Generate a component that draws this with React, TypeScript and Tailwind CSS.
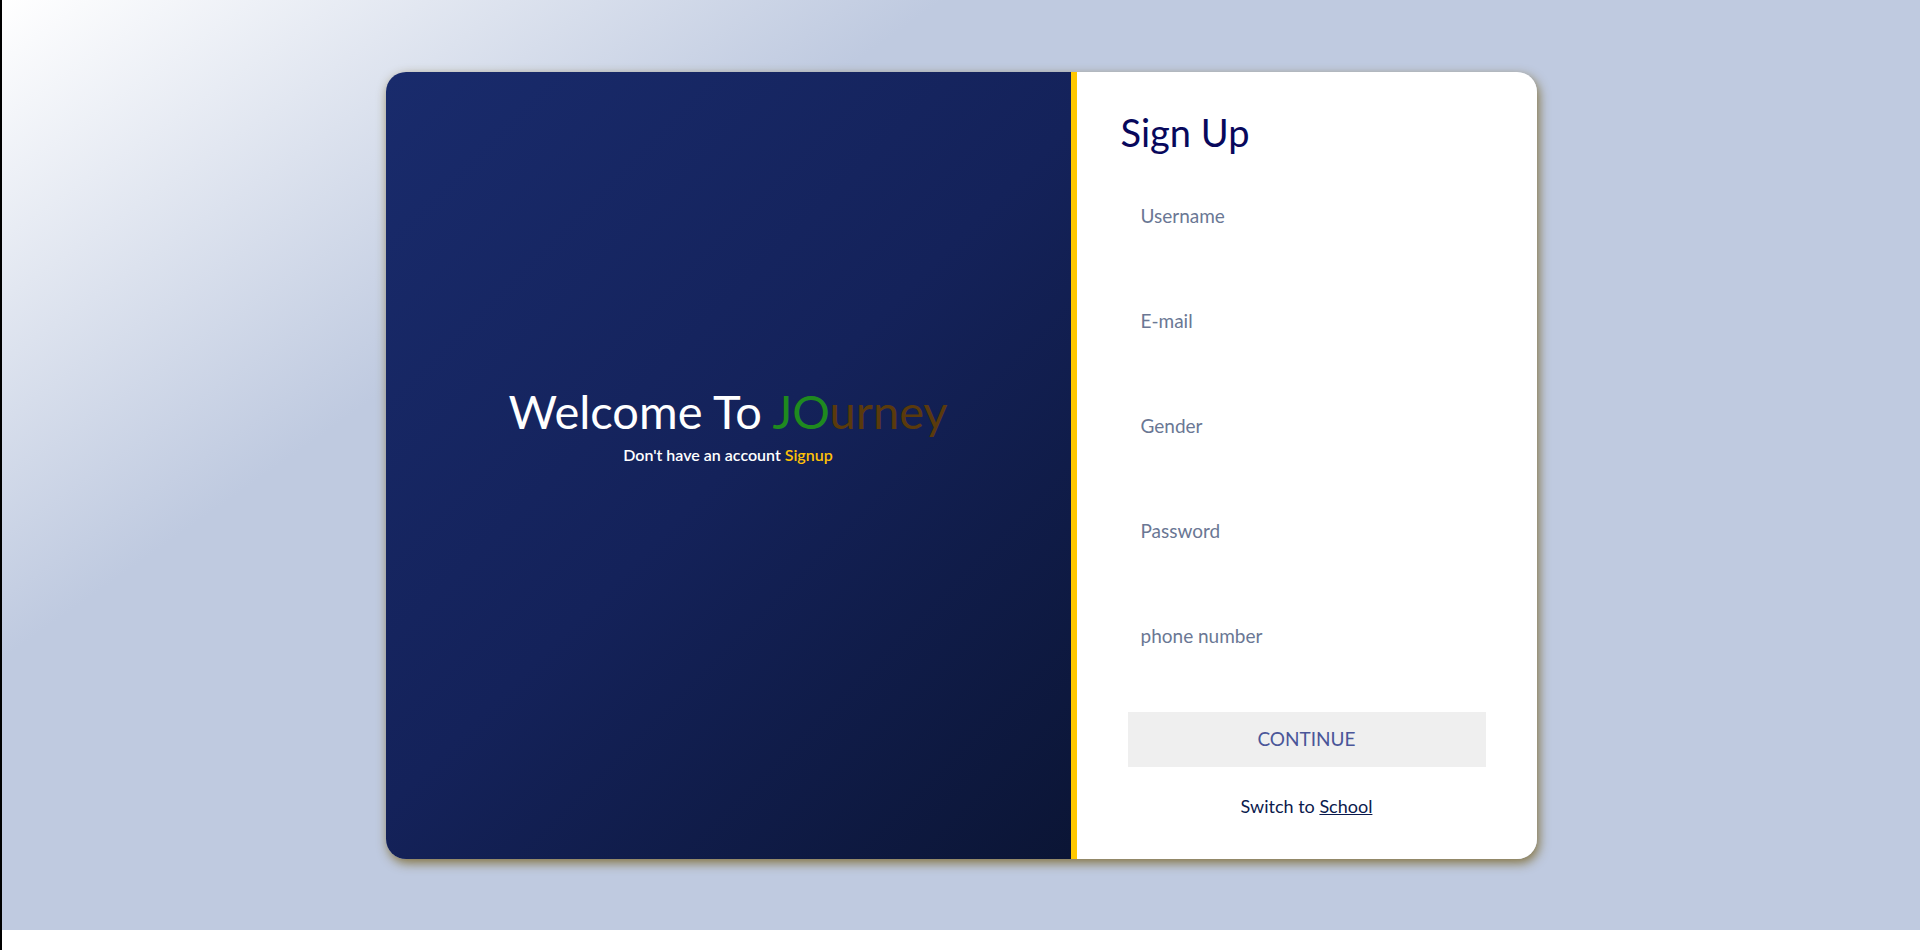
const font = { fontFamily: "Lato, 'Open Sans', sans-serif" };

const fields = ["Username", "E-mail", "Gender", "Password", "phone number"];

export default function App() {
  return (
    <div className="min-h-[950px] w-full border-l-2 border-black bg-white" style={font}>
      <div className="flex h-[930px] items-center justify-center bg-[linear-gradient(145deg,#ffffff_0%,#bfcae0_29%,#bfcae0_100%)]">
        <div className="flex h-[787px] w-[1151px] overflow-hidden rounded-[20px] shadow-[2px_4px_11px_rgba(125,105,45,0.9)]">
          <WelcomePanel />
          <div className="w-[6px] shrink-0 bg-[#ffc800]" />
          <SignUpPanel />
        </div>
      </div>
    </div>
  );
}

function WelcomePanel() {
  return (
    <div className="flex w-[685px] shrink-0 flex-col items-center justify-center bg-[linear-gradient(135deg,#192b6c_0%,#14225a_50%,#0b1535_100%)] pb-[82px]">
      <h1 className="text-[47px] leading-[56px] font-normal text-white">
        Welcome To <span className="text-[#1f8a1f]">JO</span>
        <span className="text-[#5a3a0c]">urney</span>
      </h1>
      <p className="mt-[6px] text-[16px] leading-5 font-semibold text-white">
        Don't have an account <span className="text-[#ffc107]">Signup</span>
      </p>
    </div>
  );
}

function SignUpPanel() {
  return (
    <div className="flex flex-1 flex-col bg-white pl-[44px] pt-[36px]">
      <h2 className="text-[38px] leading-[48px] font-normal text-[#08085c]">Sign Up</h2>
      <form className="mt-[35px] ml-[7px] flex w-[358px] flex-col" onSubmit={(e) => e.preventDefault()}>
        <div className="flex flex-col gap-[55px]">
          {fields.map((f) => (
            <input
              key={f}
              placeholder={f}
              className="h-[50px] w-full bg-transparent px-[13px] text-[19px] text-[#6a7794] outline-none placeholder:text-[#6a7794]"
              style={font}
            />
          ))}
        </div>
        <button
          type="submit"
          className="mt-[51px] h-[55px] w-full bg-[#efefef] text-[19px] text-[#4a5699]"
          style={font}
        >
          CONTINUE
        </button>
        <p className="mt-[29px] text-center text-[18px] leading-5 text-[#0b1a4d]">
          Switch to <a className="underline">School</a>
        </p>
      </form>
    </div>
  );
}
